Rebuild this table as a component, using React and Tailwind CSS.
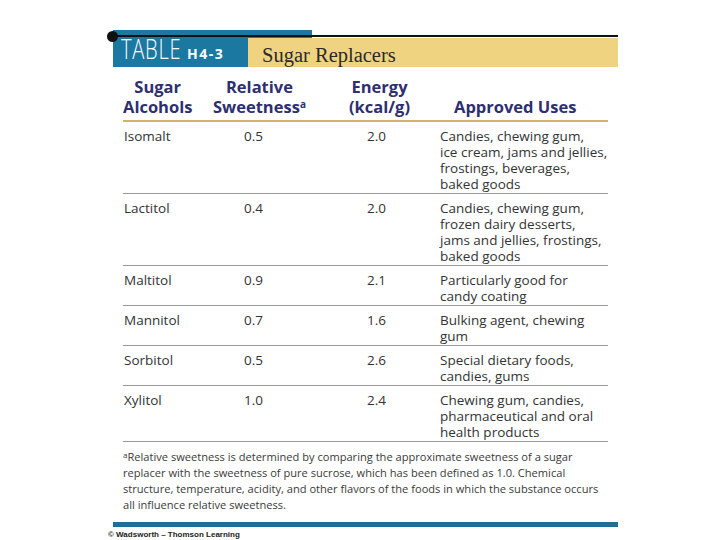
import React from 'react'

const rows = [
    { name: 'Isomalt', rel: '0.5', kcal: '2.0', uses: ['Candies, chewing gum,', 'ice cream, jams and jellies,', 'frostings, beverages,', 'baked goods'] },
    { name: 'Lactitol', rel: '0.4', kcal: '2.0', uses: ['Candies, chewing gum,', 'frozen dairy desserts,', 'jams and jellies, frostings,', 'baked goods'] },
    { name: 'Maltitol', rel: '0.9', kcal: '2.1', uses: ['Particularly good for', 'candy coating'] },
    { name: 'Mannitol', rel: '0.7', kcal: '1.6', uses: ['Bulking agent, chewing', 'gum'] },
    { name: 'Sorbitol', rel: '0.5', kcal: '2.6', uses: ['Special dietary foods,', 'candies, gums'] },
    { name: 'Xylitol', rel: '1.0', kcal: '2.4', uses: ['Chewing gum, candies,', 'pharmaceutical and oral', 'health products'] },
]

function App() {
    return (
        <div className="relative w-[720px] h-[540px] bg-white overflow-hidden" style={{ fontFamily: '"Open Sans", "Noto Sans", sans-serif' }}>
            <div className="ml-[113px] w-[505px] pt-[30px]">
                {/* title bar */}
                <div className="relative flex h-[37px]">
                    <div className="w-[135px] shrink-0 bg-[#1b78a1] flex items-end pl-[8px] pb-[2px] whitespace-nowrap">
                        <span className="inline-block w-[66px] overflow-visible">
                            <span className="inline-block origin-left scale-x-[72%] text-white font-light text-[28px] leading-[28px] tracking-[1px]">TABLE</span>
                        </span>
                        <span className="text-white text-[14px] leading-[20px] font-bold tracking-[1.5px] mb-[1px]">H4-3</span>
                    </div>
                    <div className="flex-1 flex flex-col">
                        <div className="h-[11px] w-[64px] bg-[#1b78a1]"></div>
                        <div className="flex-1 bg-[#f0d381] pl-[14px] pt-[5px] flex items-center">
                            <span className="text-[20.5px] leading-[24px] text-[#2a2a2a]" style={{ fontFamily: '"Liberation Serif", serif' }}>Sugar Replacers</span>
                        </div>
                    </div>
                    <div className="absolute left-[-1px] right-0 top-[5px] h-[2px] bg-[#111]"></div>
                    <div className="absolute left-[-6px] top-[1px] w-[11px] h-[11px] rounded-full bg-[#111]"></div>
                </div>

                {/* column heads */}
                <div className="ml-[10px] w-[485px] mt-[10px] flex items-end text-[#2d2f70] font-bold text-[16.5px] leading-[20px]">
                    <div className="w-[90px]"><div className="inline-block text-center">Sugar<br />Alcohols</div></div>
                    <div className="w-[136px]"><div className="inline-block text-center">Relative<br />Sweetness<span className="text-[10px] align-top leading-[14px]">a</span></div></div>
                    <div className="w-[105px]"><div className="inline-block text-center">Energy<br />(kcal/g)</div></div>
                    <div className="flex-1"><div className="inline-block text-center">Approved Uses</div></div>
                </div>
                <div className="ml-[10px] w-[485px] mt-[3px] h-[2px] bg-[#d5b26c]"></div>

                {/* rows */}
                <div className="ml-[10px] w-[485px] text-[13.5px] leading-[16px] text-[#333]">
                    {rows.map((r) => (
                        <div key={r.name} className="flex pt-[6px] pb-[1px] border-b border-[#9a9a9a]">
                            <div className="w-[121px] pl-[1px]">{r.name}</div>
                            <div className="w-[123px]">{r.rel}</div>
                            <div className="w-[73px]">{r.kcal}</div>
                            <div className="flex-1">
                                {r.uses.map((u, i) => <div key={i}>{u}</div>)}
                            </div>
                        </div>
                    ))}
                </div>

                {/* footnote */}
                <div className="ml-[10px] w-[490px] mt-[7px] text-[11.1px] leading-[16px] text-[#3a3a3a] whitespace-nowrap">
                    <span className="text-[8px] align-top leading-[12px]">a</span>Relative sweetness is determined by comparing the approximate sweetness of a sugar<br />
                    replacer with the sweetness of pure sucrose, which has been defined as 1.0. Chemical<br />
                    structure, temperature, acidity, and other flavors of the foods in which the substance occurs<br />
                    all influence relative sweetness.
                </div>

                <div className="mt-[9px] h-[5px] bg-[#1d6f98]"></div>
            </div>
            <div className="ml-[108px] mt-[3px] text-[8px] leading-[10px] font-bold text-[#222]" style={{ fontFamily: '"Liberation Sans", Arial, sans-serif' }}>
                © Wadsworth – Thomson Learning
            </div>
        </div>
    )
}

export default App
